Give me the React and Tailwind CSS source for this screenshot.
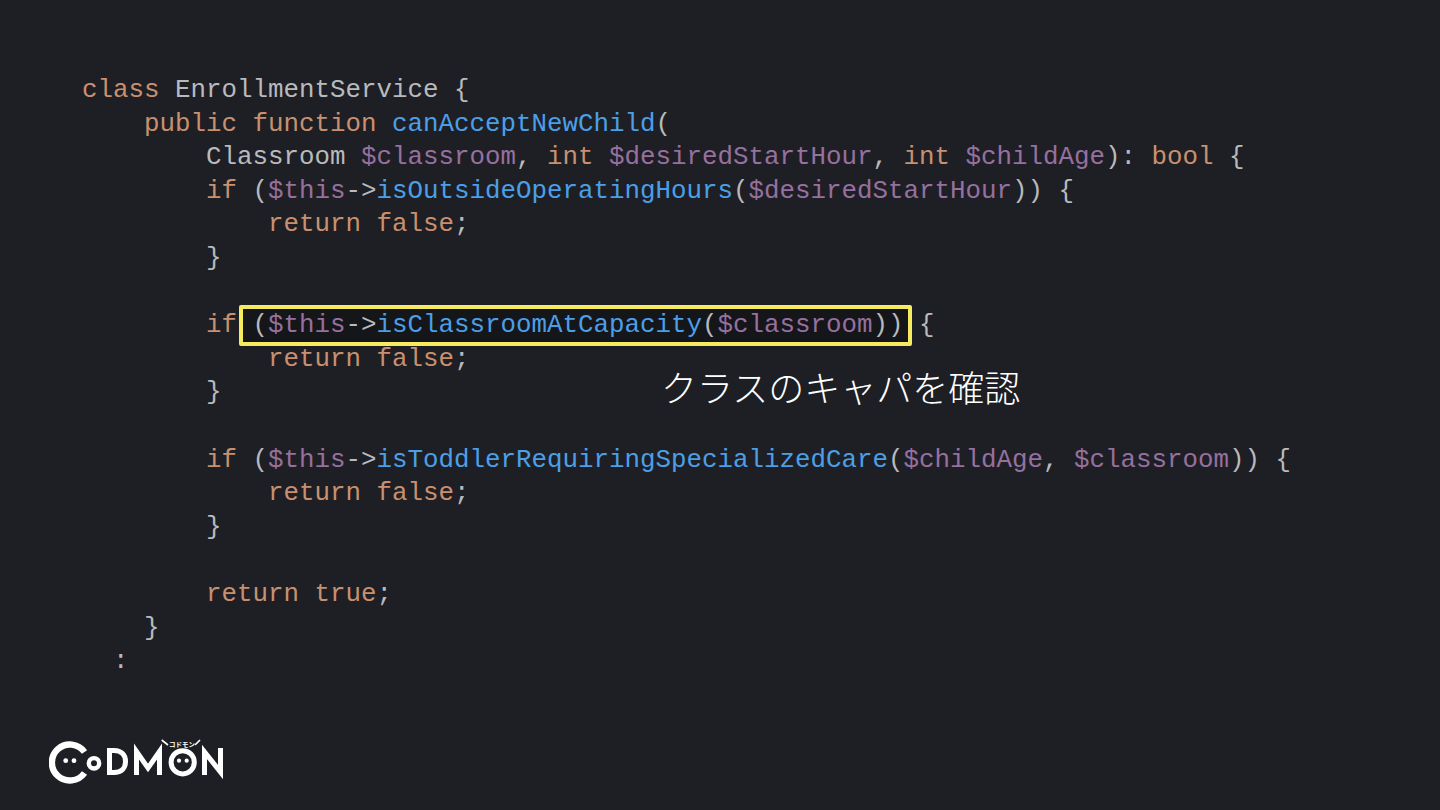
import React from 'react';

const K = ({ children }) => <span className="text-[#c9906f]">{children}</span>;
const V = ({ children }) => <span className="text-[#96709f]">{children}</span>;
const F = ({ children }) => <span className="text-[#4b9fe8]">{children}</span>;

function Logo() {
  return (
    <svg width="190" height="50" viewBox="0 0 190 50" className="block" fill="none" stroke="#fff">
      {/* big C with face */}
      <path d="M35.5 14 A18 18 0 1 0 35.5 35" strokeWidth="6.4" />
      <circle cx="16.7" cy="22.7" r="2.4" fill="#fff" stroke="none" />
      <circle cx="25" cy="22.7" r="2.4" fill="#fff" stroke="none" />
      {/* small o */}
      <circle cx="45" cy="25.3" r="5.2" strokeWidth="4.4" />
      {/* D */}
      <path d="M60.5 12.5 V34.5 H65 C72.5 34.5 76.5 30 76.5 23.5 C76.5 17 72.5 12.5 65 12.5 Z" strokeWidth="5" />
      {/* M */}
      <path d="M87.5 37 V13.5 L99 30 L110.5 13.5 V37" strokeWidth="5" />
      {/* O with face */}
      <circle cx="133.7" cy="24.3" r="11.6" strokeWidth="5" />
      <circle cx="130" cy="22.7" r="2.1" fill="#fff" stroke="none" />
      <circle cx="137.7" cy="22.7" r="2.1" fill="#fff" stroke="none" />
      {/* N */}
      <path d="M155.5 37 V14 L171.5 34 V10" strokeWidth="5" />
      {/* rays and small name */}
      <path d="M112.7 2 L119 7 M151 2 L146 7" strokeWidth="1.6" />
      <text x="133" y="9" textAnchor="middle" fontSize="6.5" fontWeight="700" fill="#fff" stroke="none" fontFamily="'Noto Sans CJK JP', sans-serif">コドモン</text>
    </svg>
  );
}

export default function App() {
  return (
    <div className="w-[1440px] h-[810px] overflow-hidden bg-[#1e1f24] relative flex flex-col justify-between pt-[74px] pb-[22px] pl-[82px]">
      <pre className="font-['Liberation_Mono',monospace] text-[25.83px] leading-[33.6px] text-[#b8babd] m-0">
        <div><K>class</K> EnrollmentService {'{'}</div>
        <div>{'    '}<K>public function</K> <F>canAcceptNewChild</F>(</div>
        <div>{'        '}Classroom <V>$classroom</V>, <K>int</K> <V>$desiredStartHour</V>, <K>int</K> <V>$childAge</V>): <K>bool</K> {'{'}</div>
        <div>{'        '}<K>if</K> (<V>$this</V>-&gt;<F>isOutsideOperatingHours</F>(<V>$desiredStartHour</V>)) {'{'}</div>
        <div>{'            '}<K>return false</K>;</div>
        <div>{'        }'}</div>
        <div>&nbsp;</div>
        <div>
          {'        '}<K>if</K> <span className="relative">
            <span className="absolute left-[-14px] right-[-8px] top-[-5px] bottom-[-6px] border-4 border-[#f6ea5f] bg-[#15161a] rounded-[2px]"></span>
            <span className="relative">(<V>$this</V>-&gt;<F>isClassroomAtCapacity</F>(<V>$classroom</V>))</span>
          </span> {'{'}
        </div>
        <div>{'            '}<K>return false</K>;</div>
        <div>{'        }'}</div>
        <div>&nbsp;</div>
        <div>{'        '}<K>if</K> (<V>$this</V>-&gt;<F>isToddlerRequiringSpecializedCare</F>(<V>$childAge</V>, <V>$classroom</V>)) {'{'}</div>
        <div>{'            '}<K>return false</K>;</div>
        <div>{'        }'}</div>
        <div>&nbsp;</div>
        <div>{'        '}<K>return true</K>;</div>
        <div>{'    }'}</div>
        <div>{'  :'}</div>
      </pre>
      <div className="absolute left-[661px] top-[362px] text-[36px] leading-[48px] text-white font-['Noto_Sans_CJK_JP',sans-serif] font-light">
        クラスのキャパを確認
      </div>
      <div className="ml-[-33px]">
        <Logo />
      </div>
    </div>
  );
}
